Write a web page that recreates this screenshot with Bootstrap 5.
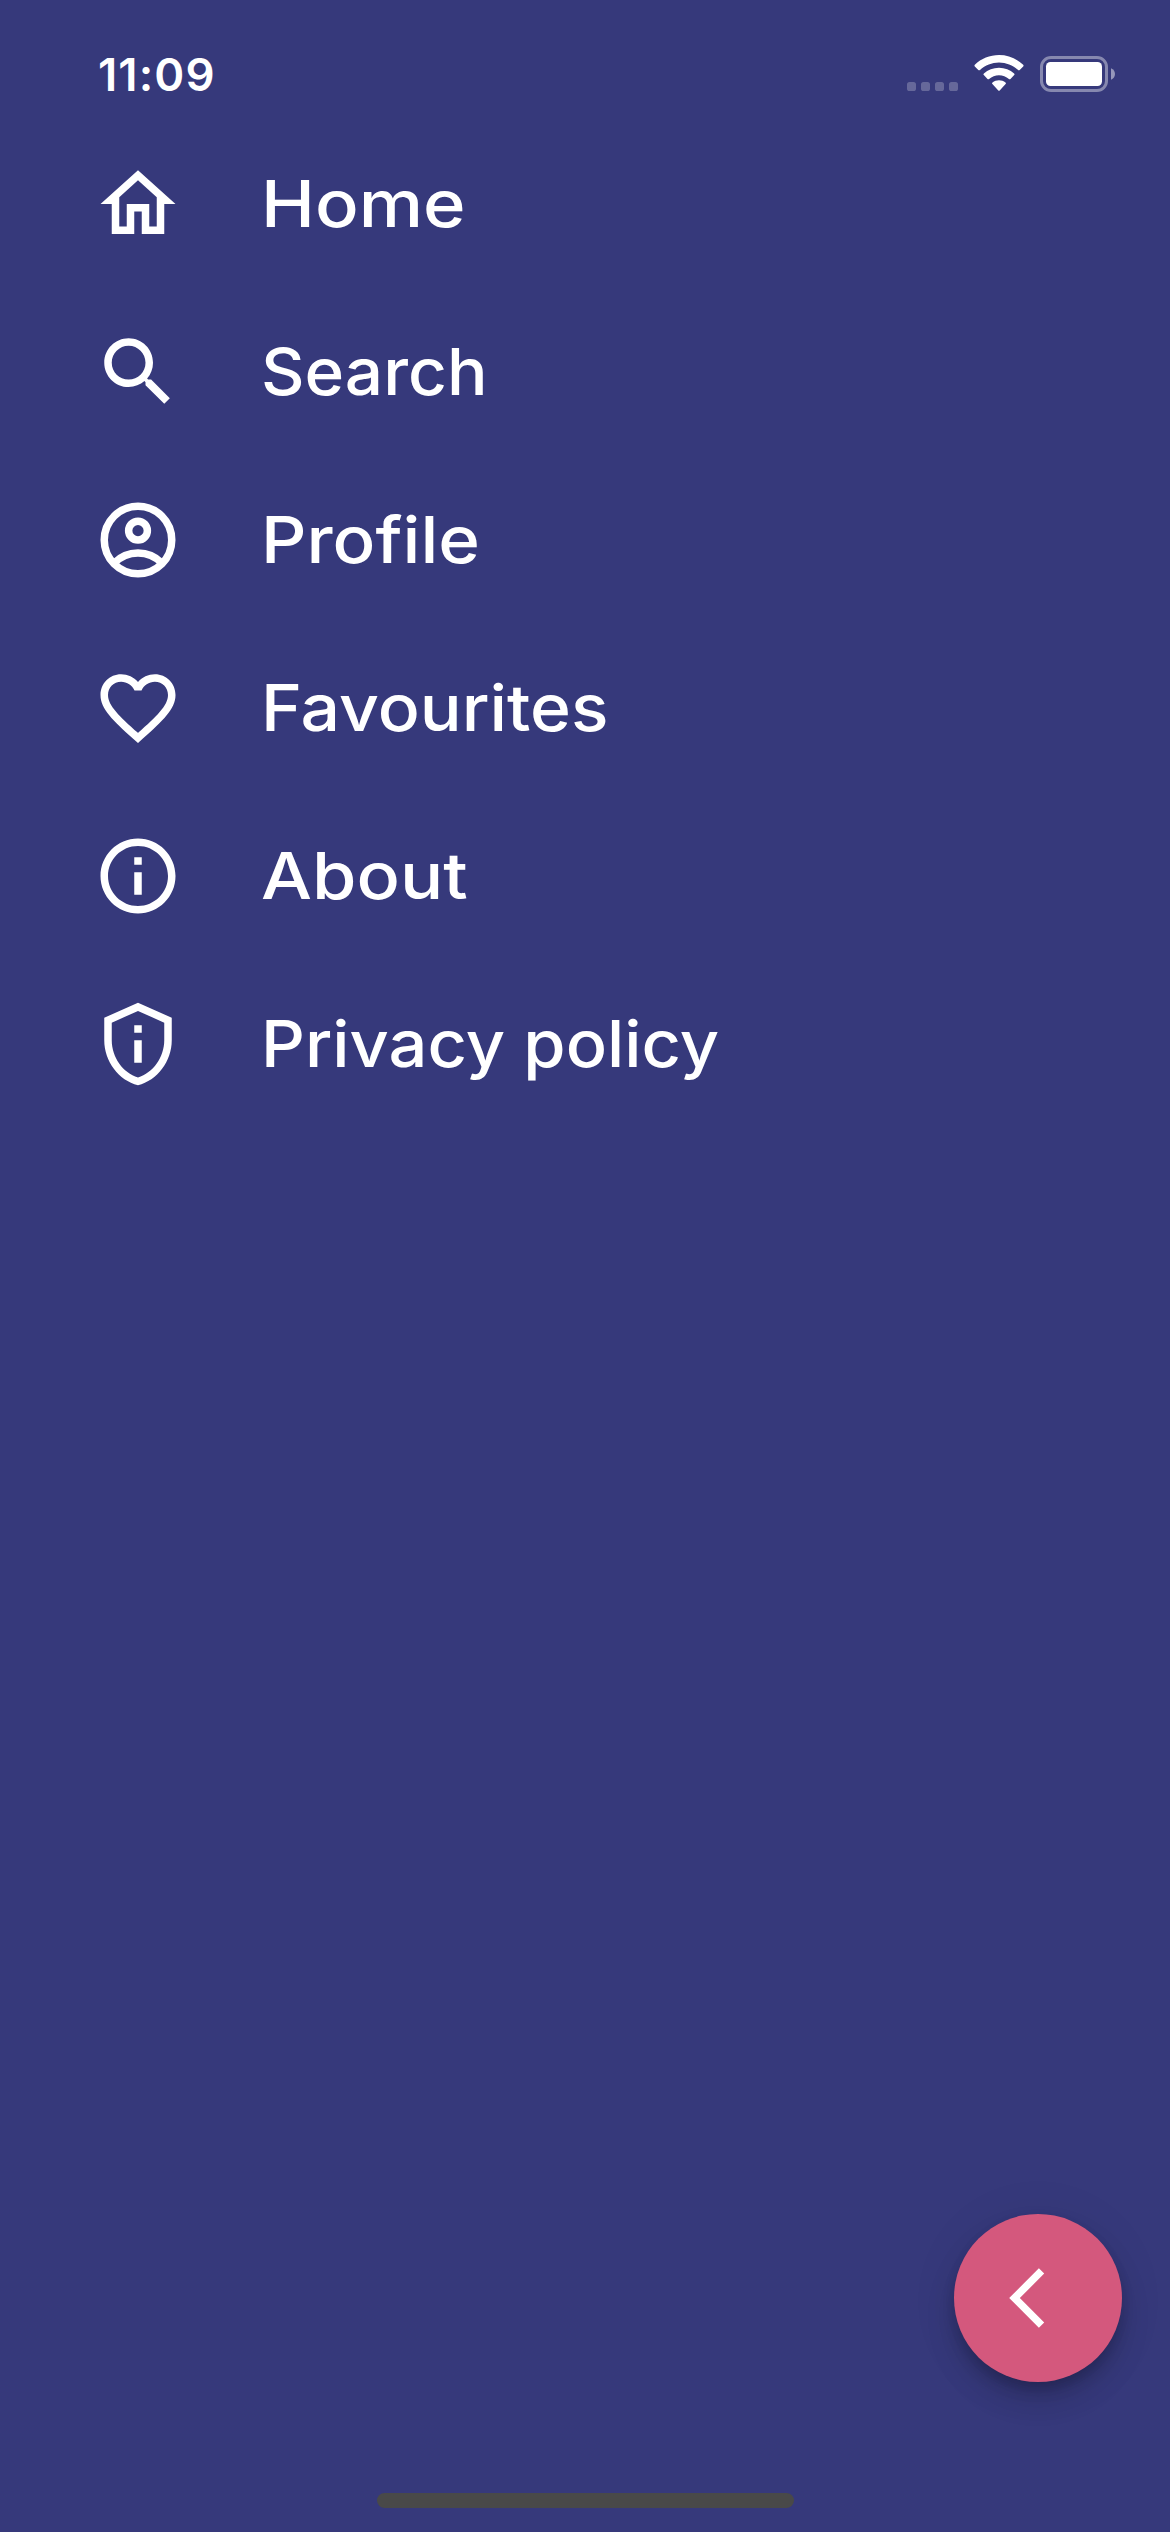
<!DOCTYPE html>
<html lang="en">
<head>
<meta charset="utf-8">
<meta name="viewport" content="width=device-width, initial-scale=1">
<title>Menu</title>
<link rel="stylesheet" href="https://cdn.jsdelivr.net/npm/bootstrap@5.3.0/dist/css/bootstrap.min.css">
<style>
  body { background: #36397b; color: #fff; font-family: Inter, "Liberation Sans", sans-serif; }
  .screen { height: 2532px; overflow: hidden; }
  .status-bar { height: 120px; padding: 0 54px 0 98px; }
  .clock { font-size: 45.5px; font-weight: 600; line-height: 54px; letter-spacing: 1.1px; margin-top: 48px; }
  .status-icons { margin-top: 52px; }
  .menu-row { height: 168px; padding-left: 93px; color: #fff; text-decoration: none; }
  .menu-icon { width: 90px; height: 90px; fill: #fff; flex: none; }
  .menu-label { font-size: 64.5px; font-weight: 500; line-height: 90px; margin-left: 78px; white-space: nowrap; transform-origin: 0 50%; }
  .label-home { transform: scaleX(1.123); }
  .label-search { transform: scaleX(1.046); }
  .label-profile { transform: scaleX(1.1); }
  .label-favourites { transform: scaleX(1.08); }
  .label-about { transform: scaleX(1.115); }
  .label-privacy { transform: scaleX(1.062); }
  .fab-row { padding: 0 48px 111px 0; }
  .fab { width: 168px; height: 168px; background: #d4587d; border: 0;
    box-shadow: 0 9px 15px -3px rgba(0,0,0,.2), 0 18px 30px rgba(0,0,0,.14), 0 3px 54px rgba(0,0,0,.06); }
  .home-bar { width: 417px; height: 15px; background: #494949; margin-bottom: 24px; }
</style>
<script src="https://cdn.jsdelivr.net/npm/bootstrap@5.3.0/dist/js/bootstrap.bundle.min.js"></script>
</head>
<body>
<div class="screen d-flex flex-column">
  <header class="status-bar d-flex justify-content-between align-items-start">
    <div class="clock">11:09</div>
    <svg class="status-icons" width="210" height="44" viewBox="906 52 210 44" fill="#fff">
      <g opacity=".24">
        <rect x="907" y="82" width="9" height="9" rx="2.6"/><rect x="921" y="82" width="9" height="9" rx="2.6"/>
        <rect x="935" y="82" width="9" height="9" rx="2.6"/><rect x="949" y="82" width="9" height="9" rx="2.6"/>
      </g>
      <path d="M999 55c9.200 0 17.700 3.600 24.200 9.700c.5.5.5 1.200 0 1.700l-3.500 3.600c-.5.5-1.200.5-1.700 0c-5.200-4.700-11.900-7.500-19-7.500s-13.800 2.800-19 7.500c-.5.5-1.200.5-1.700 0l-3.500-3.600c-.5-.5-.5-1.200 0-1.700C981.300 58.600 989.800 55 999 55z"/>
      <path d="M999 67.700c5.800 0 11.100 2.200 15.100 5.700c.6.5.6 1.200.1 1.700l-3.700 3.800c-.5.5-1.100.5-1.600.1c-2.700-2.300-6.200-3.700-9.900-3.700s-7.200 1.400-9.900 3.700c-.5.4-1.100.4-1.600-.1l-3.700-3.800c-.5-.5-.5-1.200.1-1.700c4-3.500 9.300-5.700 15.100-5.700z"/>
      <path d="M999 80.200c2.400 0 4.700.8 6.500 2.200c.6.500.6 1.100.1 1.600l-5.900 6.400c-.4.5-1 .5-1.400 0l-5.900-6.400c-.5-.5-.5-1.100.1-1.600c1.800-1.400 4.100-2.200 6.500-2.200z"/>
      <rect x="1041.500" y="57.500" width="65" height="33" rx="9.500" fill="none" stroke="#fff" stroke-width="3" opacity=".4"/>
      <rect x="1046" y="62" width="56" height="24" rx="4.500"/>
      <path d="M1111 68.300c2.500 1 4 3.200 4 5.700s-1.500 4.700-4 5.700z" opacity=".48"/>
    </svg>
  </header>

  <nav class="nav flex-column">
    <a class="menu-row d-flex align-items-center" href="#">
      <svg class="menu-icon" viewBox="0 0 24 24"><path d="M12 5.690l5 4.500V18h-2v-6H9v6H7v-7.810l5-4.500M12 3L2 12h3v8h6v-6h2v6h6v-8h3L12 3z"/></svg>
      <span class="menu-label label-home">Home</span>
    </a>
    <a class="menu-row d-flex align-items-center" href="#">
      <svg class="menu-icon" viewBox="0 0 24 24"><path d="M15.500 14h-.79l-.28-.27C15.410 12.590 16 11.110 16 9.500 16 5.910 13.090 3 9.500 3S3 5.910 3 9.500 5.910 16 9.500 16c1.610 0 3.090-.59 4.230-1.570l.27.28v.79l5 4.990L20.490 19l-4.990-5zm-6 0C7.010 14 5 11.990 5 9.500S7.010 5 9.500 5 14 7.010 14 9.500 11.990 14 9.500 14z"/></svg>
      <span class="menu-label label-search">Search</span>
    </a>
    <a class="menu-row d-flex align-items-center" href="#">
      <svg class="menu-icon" viewBox="0 0 24 24"><g fill="none" stroke="#fff" stroke-width="2"><circle cx="12" cy="12" r="9"/><circle cx="12" cy="9.500" r="2.500"/><path d="M5.700 18.100C7.400 16.350 9.600 15.450 12 15.450s4.600.9 6.300 2.650"/></g></svg>
      <span class="menu-label label-profile">Profile</span>
    </a>
    <a class="menu-row d-flex align-items-center" href="#">
      <svg class="menu-icon" viewBox="0 0 24 24"><path d="M16.500 3c-1.740 0-3.410.81-4.500 2.090C10.910 3.810 9.240 3 7.500 3 4.420 3 2 5.420 2 8.500c0 3.780 3.400 6.860 8.550 11.540L12 21.350l1.450-1.320C18.600 15.360 22 12.280 22 8.500 22 5.420 19.580 3 16.500 3zm-4.400 15.550l-.1.1-.1-.1C7.140 14.240 4 11.390 4 8.500 4 6.500 5.500 5 7.500 5c1.540 0 3.040.99 3.570 2.360h1.870C13.460 5.990 14.960 5 16.500 5c2 0 3.500 1.500 3.500 3.500 0 2.890-3.140 5.740-7.900 10.050z"/></svg>
      <span class="menu-label label-favourites">Favourites</span>
    </a>
    <a class="menu-row d-flex align-items-center" href="#">
      <svg class="menu-icon" viewBox="0 0 24 24"><path d="M11 7h2v2h-2zm0 4h2v6h-2zm1-9C6.480 2 2 6.480 2 12s4.480 10 10 10 10-4.480 10-10S17.520 2 12 2zm0 18c-4.410 0-8-3.590-8-8s3.590-8 8-8 8 3.590 8 8-3.590 8-8 8z"/></svg>
      <span class="menu-label label-about">About</span>
    </a>
    <a class="menu-row d-flex align-items-center" href="#">
      <svg class="menu-icon" viewBox="0 0 24 24"><path d="M12 1L3 5v6c0 5.550 3.840 10.740 9 12 5.160-1.260 9-6.450 9-12V5l-9-4zm7 10c0 4.520-2.980 8.690-7 9.930-4.020-1.240-7-5.410-7-9.930V6.300l7-3.110 7 3.110V11zM11 7h2v2h-2zm0 4h2v6h-2z"/></svg>
      <span class="menu-label label-privacy">Privacy policy</span>
    </a>
  </nav>

  <div class="fab-row d-flex justify-content-end mt-auto">
    <button class="fab rounded-circle d-flex align-items-center justify-content-center p-0" type="button" aria-label="Back">
      <svg width="72" height="72" viewBox="-2.400 0 24 24" fill="#fff"><path d="M11.670 3.870L9.900 2.100 0 12l9.900 9.900 1.770-1.770L3.540 12z"/></svg>
    </button>
  </div>
  <div class="home-bar rounded-pill mx-auto flex-shrink-0"></div>
</div>
</body>
</html>
